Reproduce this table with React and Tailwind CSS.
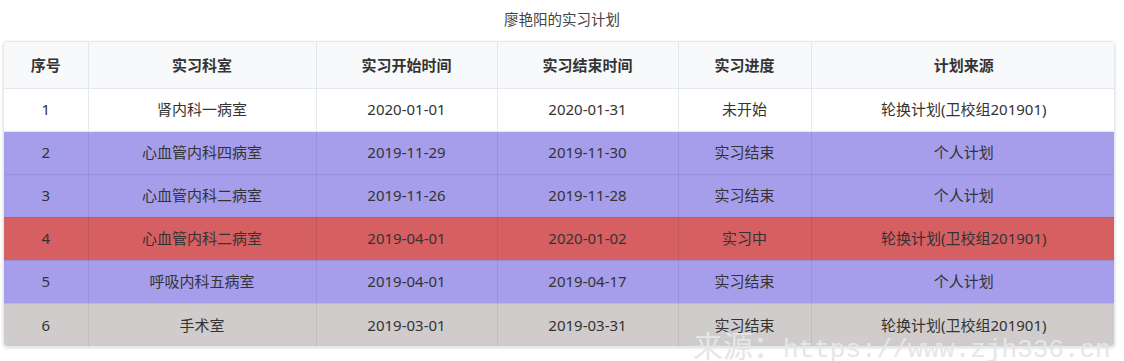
import React from "react";

const cols = [84, 228, 181, 181, 133, 305];
const headers = ["序号", "实习科室", "实习开始时间", "实习结束时间", "实习进度", "计划来源"];
const rows = [
  { bg: "bg-white", cells: ["1", "肾内科一病室", "2020-01-01", "2020-01-31", "未开始", "轮换计划(卫校组201901)"] },
  { bg: "bg-[#a69eea]", cells: ["2", "心血管内科四病室", "2019-11-29", "2019-11-30", "实习结束", "个人计划"] },
  { bg: "bg-[#a69eea]", cells: ["3", "心血管内科二病室", "2019-11-26", "2019-11-28", "实习结束", "个人计划"] },
  { bg: "bg-[#d65f61]", cells: ["4", "心血管内科二病室", "2019-04-01", "2020-01-02", "实习中", "轮换计划(卫校组201901)"] },
  { bg: "bg-[#a69eea]", cells: ["5", "呼吸内科五病室", "2019-04-01", "2019-04-17", "实习结束", "个人计划"] },
  { bg: "bg-[#cfcccb]", cells: ["6", "手术室", "2019-03-01", "2019-03-31", "实习结束", "轮换计划(卫校组201901)"] },
];

export default function App() {
  return (
    <div
      className="relative w-[1124px] h-[361px] bg-white overflow-hidden text-[#333]"
      style={{ fontFamily: '"Noto Sans", "Noto Sans CJK SC", sans-serif' }}
    >
      <div className="h-[41px] flex items-center justify-center pb-[2px] text-[14.5px] text-[#444]">
        廖艳阳的实习计划
      </div>
      <div className="ml-[3px] w-[1112px] rounded-[4px] border border-[#e4e7ed] overflow-hidden shadow-[0_1px_3px_rgba(0,0,0,0.15)]">
        <table className="w-full border-collapse table-fixed text-[15px]">
          <colgroup>
            {cols.map((w, i) => (
              <col key={i} style={{ width: w }} />
            ))}
          </colgroup>
          <thead>
            <tr className="bg-[#f8f9fa] h-[46px]">
              {headers.map((h, i) => (
                <th
                  key={i}
                  className={`font-bold text-center border-b border-[#e4e7ed] ${i < 5 ? "border-r" : ""} border-[#e4e7ed]`}
                >
                  {h}
                </th>
              ))}
            </tr>
          </thead>
          <tbody>
            {rows.map((r, ri) => (
              <tr key={ri} className={`${r.bg} h-[43px]`}>
                {r.cells.map((c, ci) => (
                  <td
                    key={ci}
                    className={`text-center font-normal ${ri < rows.length - 1 ? "border-b" : ""} ${ci < 5 ? "border-r" : ""} ${ri === 0 ? "border-[#e4e7ed]" : "border-[rgba(0,0,0,0.07)]"}`}
                  >
                    {c}
                  </td>
                ))}
              </tr>
            ))}
          </tbody>
        </table>
      </div>
      <div className="absolute left-[693px] top-[329px] flex items-baseline whitespace-nowrap text-[#e6e6e6] pointer-events-none">
        <span
          className="text-[30px] leading-[30px]"
          style={{ fontFamily: '"Noto Sans CJK SC", sans-serif' }}
        >
          来源：
        </span>
        <span
          className="text-[26px] leading-[30px]"
          style={{ fontFamily: '"Liberation Mono", monospace' }}
        >
          {" "}https://www.zjh336.cn
        </span>
      </div>
    </div>
  );
}
